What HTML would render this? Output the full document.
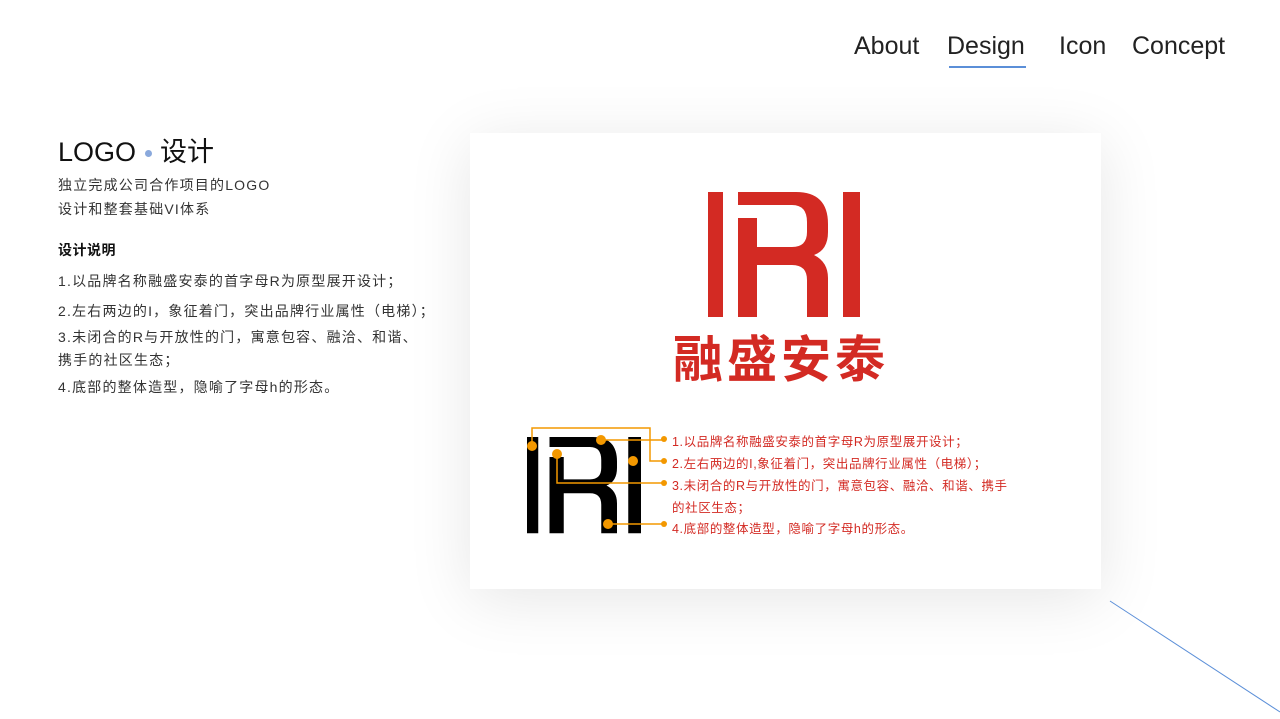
<!DOCTYPE html>
<html><head><meta charset="utf-8"><style>
*{margin:0;padding:0;box-sizing:border-box}
body{width:1280px;height:719px;overflow:hidden;background:#fff;position:relative;font-family:"Liberation Sans","Noto Sans CJK SC",sans-serif;color:#222}
.nav{position:absolute;top:32px;font-size:25px;color:#222;font-weight:300}
.t{position:absolute;left:58px;white-space:nowrap;font-size:14px;color:#333;letter-spacing:1.2px}
.card{position:absolute;left:470px;top:133px;width:631px;height:456px;background:#fff;box-shadow:0 10px 60px rgba(0,0,0,0.10)}
.r{position:absolute;left:672px;font-size:12.5px;color:#d32a23;white-space:nowrap;letter-spacing:0.6px}
</style></head><body>
<div class="nav" style="left:854px">About</div>
<div class="nav" style="left:947px">Design</div>
<div style="position:absolute;left:949px;top:66px;width:77px;height:2px;background:#5b8fd8"></div>
<div class="nav" style="left:1059px">Icon</div>
<div class="nav" style="left:1132px">Concept</div>

<div style="position:absolute;left:58px;top:130px;font-size:27px;color:#111;white-space:nowrap">LOGO <span style="display:inline-block;width:7px;height:7px;border-radius:50%;background:#8aa9dc;vertical-align:middle;margin:0 1px"></span> 设计</div>
<div class="t" style="top:175px">独立完成公司合作项目的LOGO</div>
<div class="t" style="top:199px">设计和整套基础VI体系</div>
<div class="t" style="top:240px;font-weight:bold;color:#111;letter-spacing:0.5px">设计说明</div>
<div class="t" style="top:271px">1.以品牌名称融盛安泰的首字母R为原型展开设计；</div>
<div class="t" style="top:301px">2.左右两边的I，象征着门，突出品牌行业属性（电梯）；</div>
<div class="t" style="top:327px">3.未闭合的R与开放性的门，寓意包容、融洽、和谐、</div>
<div class="t" style="top:350px">携手的社区生态；</div>
<div class="t" style="top:377px">4.底部的整体造型，隐喻了字母h的形态。</div>

<div class="card"></div>
<svg style="position:absolute;left:0;top:0" width="1280" height="719">
<defs><g id="lg">
<rect x="0" y="0" width="15" height="125"/>
<path d="M30 0H88Q120 0 120 32V40Q120 58 106 63Q120 70 120 86V125H99V88Q99 73 84 73H49V125H30V26H49V55H84Q99 55 99 40V30Q99 13 84 13H30Z"/>
<rect x="135" y="0" width="17" height="125"/>
</g></defs>
<use href="#lg" transform="translate(708,192)" fill="#d32a23"/>
<text x="781" y="377" text-anchor="middle" font-size="50" font-weight="bold" fill="#d32a23" font-family="Liberation Sans, Noto Sans CJK SC, sans-serif" letter-spacing="4">融盛安泰</text>
<use href="#lg" transform="translate(527,437) scale(0.75,0.77)" fill="#000"/>
<g stroke="#f39800" stroke-width="1.5" fill="none">
<path d="M532 446V428H650V461H664"/>
<path d="M601 440H664"/>
<path d="M557 454V483H664"/>
<path d="M608 524H664"/>
</g>
<g fill="#f39800">
<circle cx="532" cy="446" r="5"/><circle cx="601" cy="440" r="5"/><circle cx="557" cy="454" r="5"/><circle cx="633" cy="461" r="5"/><circle cx="608" cy="524" r="5"/>
<circle cx="664" cy="439" r="3"/><circle cx="664" cy="461" r="3"/><circle cx="664" cy="483" r="3"/><circle cx="664" cy="524" r="3"/>
</g>
<line x1="1110" y1="601" x2="1280" y2="712" stroke="#5b8fd8" stroke-width="1"/>
</svg>
<div class="r" style="top:431px">1.以品牌名称融盛安泰的首字母R为原型展开设计；</div>
<div class="r" style="top:453px">2.左右两边的I,象征着门，突出品牌行业属性（电梯）；</div>
<div class="r" style="top:475px">3.未闭合的R与开放性的门，寓意包容、融洽、和谐、携手</div>
<div class="r" style="top:497px">的社区生态；</div>
<div class="r" style="top:518px">4.底部的整体造型，隐喻了字母h的形态。</div>
</body></html>
